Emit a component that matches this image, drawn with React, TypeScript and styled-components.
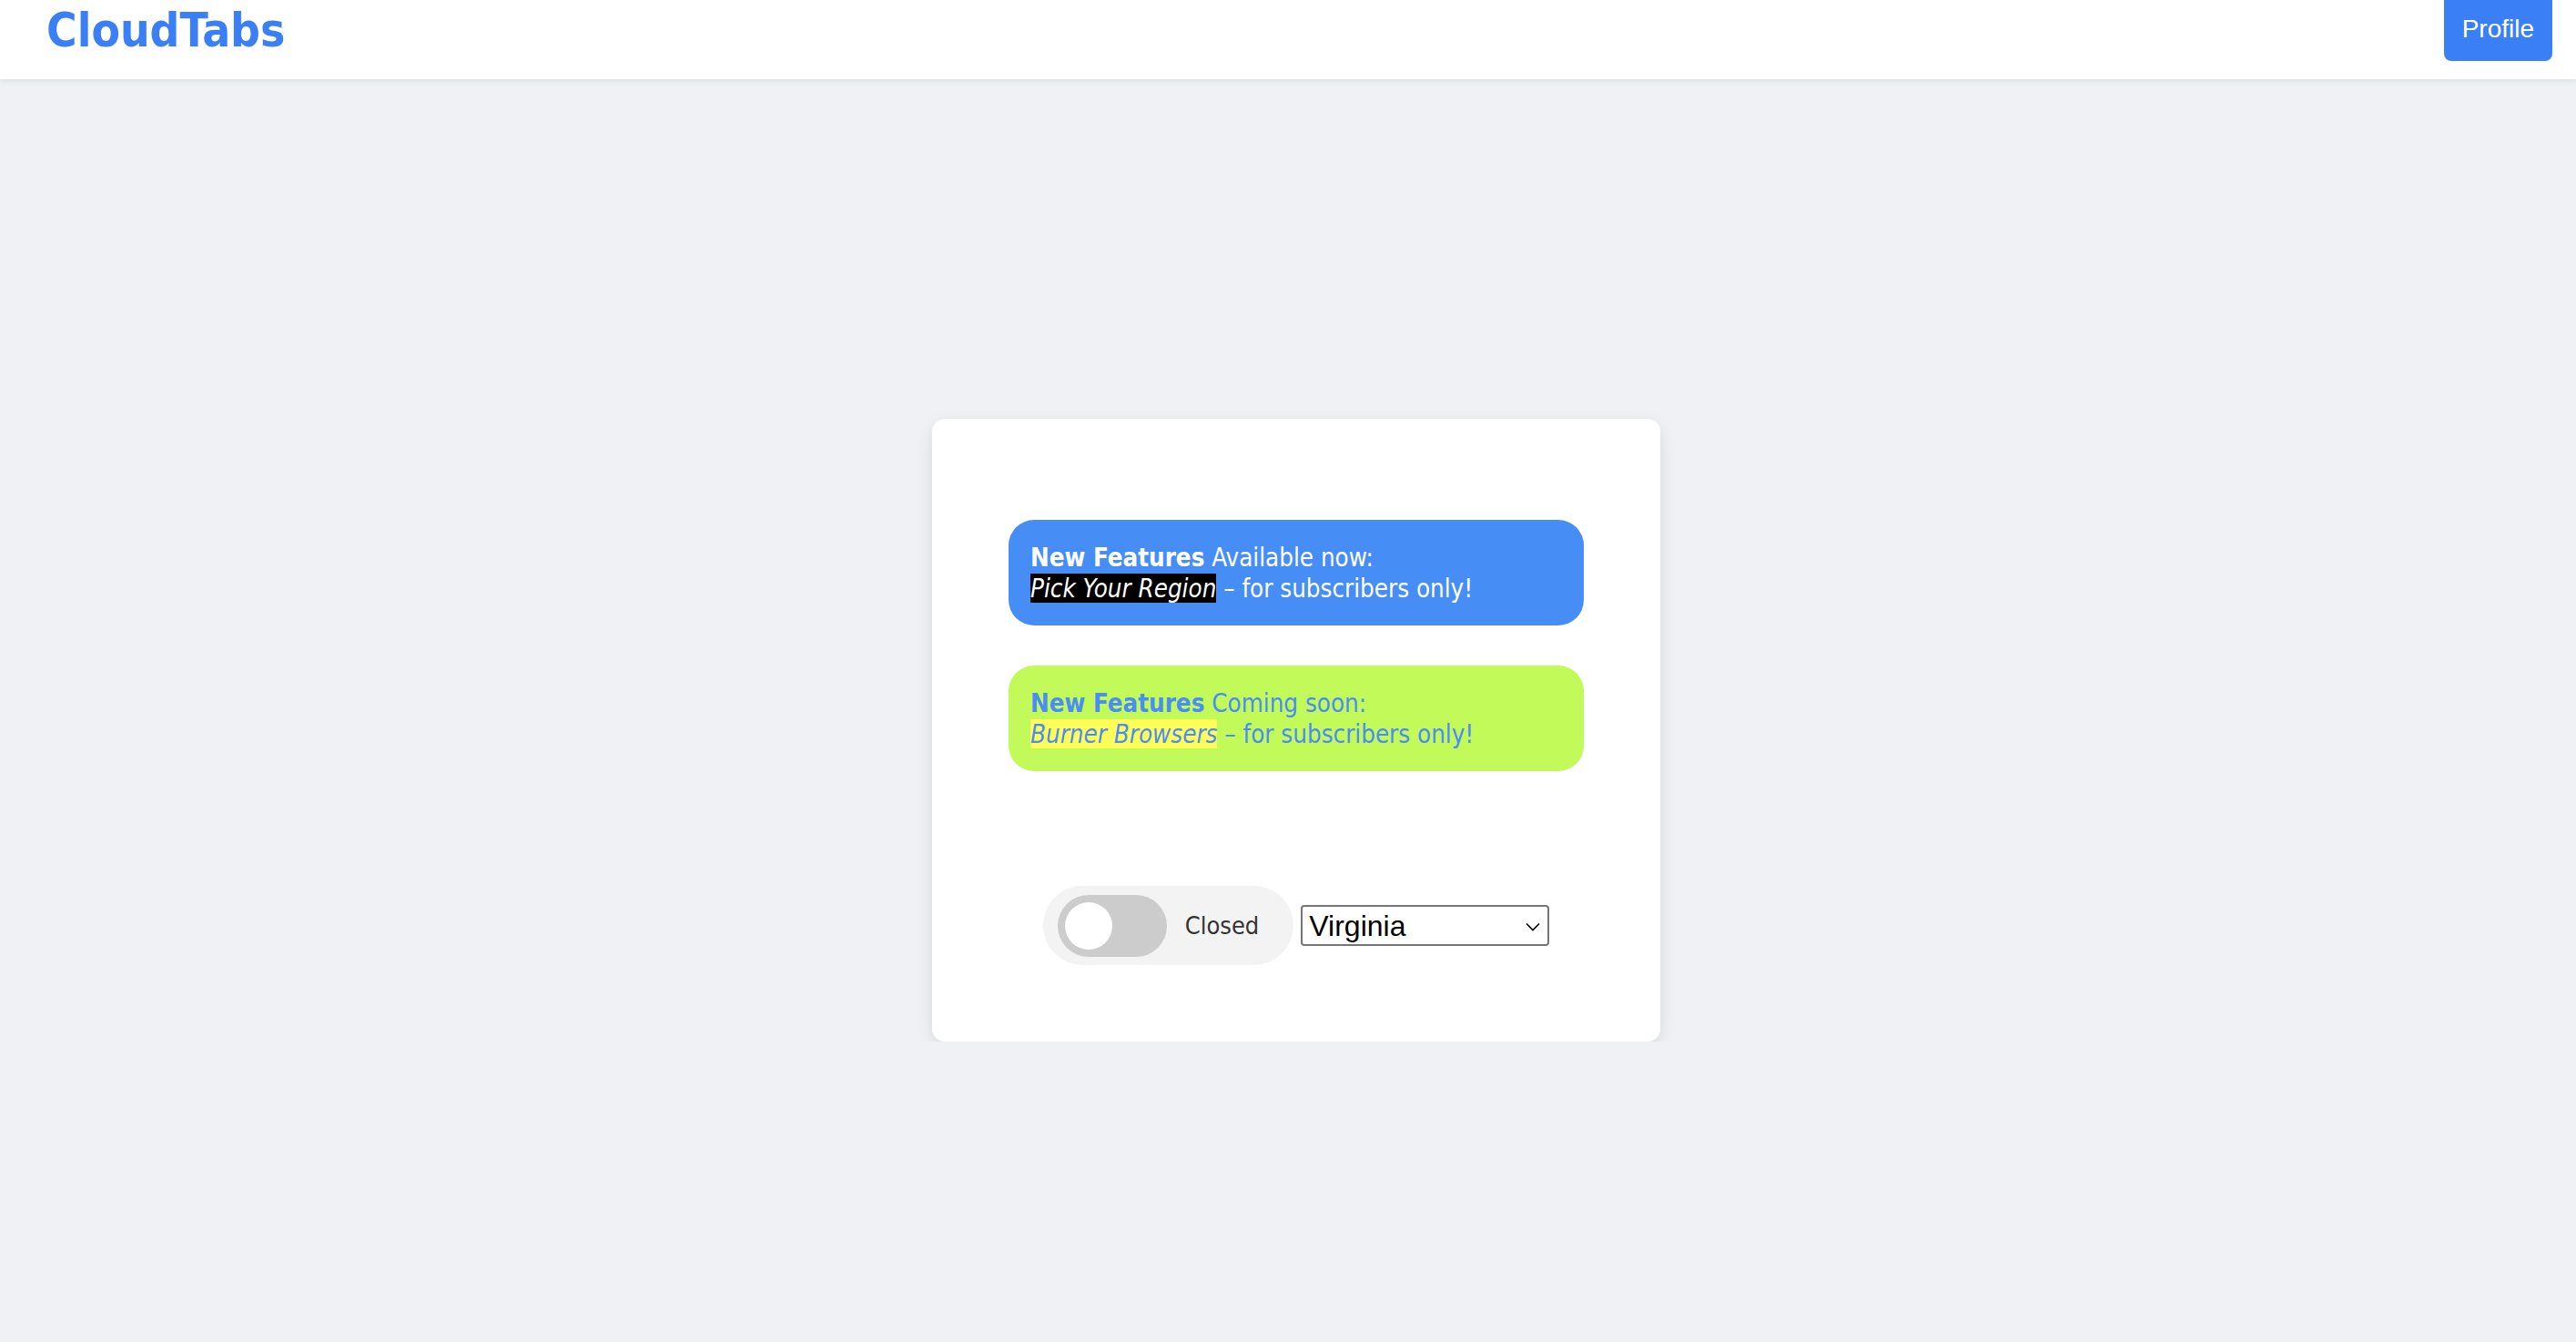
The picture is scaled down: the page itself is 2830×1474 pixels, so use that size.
import { useState } from "react";
import styled, { createGlobalStyle } from "styled-components";

const GlobalStyle = createGlobalStyle`
  body {
    margin: 0;
    background-color: #eff1f5;
    font-family: "DejaVu Sans Condensed", "DejaVu Sans", sans-serif;
  }
`;

const Header = styled.header`
  display: flex;
  justify-content: space-between;
  align-items: flex-start;
  height: 87px;
  padding: 0 26px 0 51px;
  box-sizing: border-box;
  background-color: #ffffff;
  box-shadow: 0 2px 6px rgba(0, 0, 0, 0.08);
`;

const Logo = styled.h1`
  margin: 0;
  font-family: "DejaVu Sans Condensed", "DejaVu Sans", sans-serif;
  font-stretch: condensed;
  font-size: 51px;
  font-weight: 700;
  line-height: 67px;
  color: #3b7ff6;
`;

const ProfileButton = styled.button`
  height: 67px;
  padding: 0 20px 4px;
  border: none;
  border-radius: 0 0 8px 8px;
  background-color: #3b7ff6;
  color: #ffffff;
  font-family: "Liberation Sans", Arial, sans-serif;
  font-size: 28px;
  cursor: pointer;
`;

const Main = styled.main`
  display: flex;
  justify-content: center;
  padding: 373px 0 0 18px;
`;

const Card = styled.section`
  display: flex;
  flex-direction: column;
  width: 800px;
  padding: 111px 84px 84px;
  box-sizing: border-box;
  background-color: #ffffff;
  border-radius: 14px;
  box-shadow: 0 6px 18px rgba(0, 0, 0, 0.1);
`;

const BannerList = styled.div`
  display: flex;
  flex-direction: column;
  gap: 44px;
`;

const Banner = styled.div<{ $tone: "blue" | "lime" }>`
  padding: 24px 24px;
  border-radius: 28px;
  font-stretch: condensed;
  font-size: 27.5px;
  line-height: 34px;
  background-color: ${(p) => (p.$tone === "blue" ? "#468ef5" : "#c1fa59")};
  color: ${(p) => (p.$tone === "blue" ? "#ffffff" : "#4a8df5")};
`;

const Highlight = styled.mark<{ $tone: "blue" | "lime" }>`
  font-style: italic;
  background-color: ${(p) => (p.$tone === "blue" ? "#000000" : "#ffff58")};
  color: inherit;
`;

const Controls = styled.div`
  display: flex;
  justify-content: center;
  align-items: center;
  gap: 8px;
  margin-top: 126px;
`;

const TogglePill = styled.label`
  display: flex;
  align-items: center;
  gap: 20px;
  height: 87px;
  padding: 0 38px 0 16px;
  box-sizing: border-box;
  border-radius: 44px;
  background-color: #f3f3f3;
  cursor: pointer;
`;

const Track = styled.span<{ $on: boolean }>`
  position: relative;
  width: 120px;
  height: 68px;
  border-radius: 34px;
  background-color: ${(p) => (p.$on ? "#3b7ff6" : "#cccccc")};
  transition: 0.2s;
`;

const Knob = styled.span<{ $on: boolean }>`
  position: absolute;
  top: 8px;
  left: ${(p) => (p.$on ? "60px" : "8px")};
  width: 52px;
  height: 52px;
  border-radius: 50%;
  background-color: #ffffff;
  transition: 0.2s;
`;

const ToggleLabel = styled.span`
  font-stretch: condensed;
  font-size: 27px;
  color: #333333;
`;

const HiddenCheckbox = styled.input`
  display: none;
`;

const SelectWrap = styled.div`
  position: relative;
  width: 273px;
  height: 45px;
`;

const RegionSelect = styled.select`
  appearance: none;
  width: 100%;
  height: 100%;
  padding: 0 40px 0 7px;
  box-sizing: border-box;
  border: 2px solid #767676;
  border-radius: 4px;
  background-color: #ffffff;
  color: #000000;
  font-family: "Liberation Sans", Arial, sans-serif;
  font-size: 32px;
`;

const Chevron = styled.svg`
  position: absolute;
  top: 50%;
  right: 10px;
  width: 16px;
  height: 10px;
  margin-top: -4px;
  pointer-events: none;
`;

const App = () => {
  const [open, setOpen] = useState(false);
  const [region, setRegion] = useState("virginia");

  return (
    <>
      <GlobalStyle />
      <Header>
        <Logo>CloudTabs</Logo>
        <ProfileButton>Profile</ProfileButton>
      </Header>
      <Main>
        <Card>
          <BannerList>
            <Banner $tone="blue">
              <b>New Features</b> Available now:
              <br />
              <Highlight $tone="blue">Pick Your Region</Highlight> – for
              subscribers only!
            </Banner>
            <Banner $tone="lime">
              <b>New Features</b> Coming soon:
              <br />
              <Highlight $tone="lime">Burner Browsers</Highlight> – for
              subscribers only!
            </Banner>
          </BannerList>
          <Controls>
            <TogglePill>
              <HiddenCheckbox
                type="checkbox"
                checked={open}
                onChange={() => setOpen(!open)}
              />
              <Track $on={open}>
                <Knob $on={open} />
              </Track>
              <ToggleLabel>{open ? "Open" : "Closed"}</ToggleLabel>
            </TogglePill>
            <SelectWrap>
              <RegionSelect
                value={region}
                onChange={(e) => setRegion(e.target.value)}
              >
                <option value="virginia">Virginia</option>
                <option value="ohio">Ohio</option>
                <option value="oregon">Oregon</option>
                <option value="frankfurt">Frankfurt</option>
              </RegionSelect>
              <Chevron viewBox="0 0 16 10">
                <path
                  d="M1 1.5 L8 8.5 L15 1.5"
                  fill="none"
                  stroke="#000"
                  strokeWidth="1.6"
                />
              </Chevron>
            </SelectWrap>
          </Controls>
        </Card>
      </Main>
    </>
  );
};

export default App;
